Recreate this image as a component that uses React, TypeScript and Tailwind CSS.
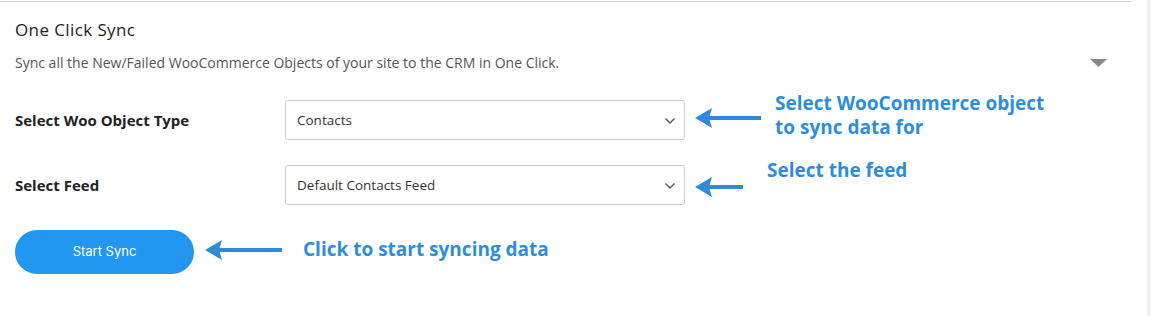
import React from "react";

function Arrow({ width }: { width: number }) {
  return (
    <svg width={width} height={20} viewBox={`0 0 ${width} 20`} className="shrink-0">
      <polygon points="0,10 17,0 14,10 17,20" fill="#2f8bd9" />
      <rect x={12} y={8} width={width - 12} height={4} fill="#2f8bd9" />
    </svg>
  );
}

function Select({ value }: { value: string }) {
  return (
    <div className="w-[400px] h-[40px] shrink-0 border border-[#cfcfcf] rounded-[3px] bg-white flex items-center justify-between pl-[11px] pr-[8px] text-[13.5px] text-[#333]">
      <span>{value}</span>
      <svg width="12" height="8" viewBox="0 0 12 8" className="mt-[1px]">
        <path d="M1.5 1.5 L6 6 L10.5 1.5" fill="none" stroke="#555" strokeWidth="1.4" />
      </svg>
    </div>
  );
}

const note = "font-['Open_Sans',sans-serif] font-bold text-[19px] leading-[24px] text-[#2e8ddb] whitespace-nowrap";

export default function App() {
  return (
    <div className="w-[1151px] h-[316px] bg-white flex font-['Open_Sans',sans-serif]">
      <div className="w-[1147px] pt-px">
        <div className="w-[1131px] border-t border-[#cccccc]" />
        <div className="w-[1131px] px-[15px]">
          <h2 className="mt-[16px] text-[17px] leading-[24px] tracking-[0.4px] font-medium text-[#222]">One Click Sync</h2>
          <div className="mt-[11px] flex items-center justify-between pr-[9px]">
            <p className="text-[14px] leading-[20px] text-[#555]">
              Sync all the New/Failed WooCommerce Objects of your site to the CRM in One Click.
            </p>
            <svg width="17" height="9" viewBox="0 0 17 9">
              <polygon points="0,0 17,0 8.5,8" fill="#8a8a8a" />
            </svg>
          </div>

          <div className="mt-[27px] h-[40px] flex items-center">
            <label className="w-[270px] shrink-0 text-[15px] font-bold text-[#222]">Select Woo Object Type</label>
            <Select value="Contacts" />
            <div className="ml-[10px] mb-[4px]">
              <Arrow width={66} />
            </div>
            <div className={`ml-[14px] self-start -mt-[9px] ${note}`}>
              Select WooCommerce object
              <br />
              to sync data for
            </div>
          </div>

          <div className="mt-[25px] h-[40px] flex items-center">
            <label className="w-[270px] shrink-0 text-[15px] font-bold text-[#222]">Select Feed</label>
            <Select value="Default Contacts Feed" />
            <div className="ml-[10px] mt-[3px]">
              <Arrow width={48} />
            </div>
            <div className={`ml-[24px] self-start -mt-[7px] ${note}`}>Select the feed</div>
          </div>

          <div className="mt-[25px] h-[44px] flex items-center">
            <button className="w-[179px] h-[44px] rounded-full bg-[#2397f0] text-white text-[13px] font-['Inter',sans-serif]">
              Start Sync
            </button>
            <div className="ml-[11px] mb-[4px]">
              <Arrow width={77} />
            </div>
            <div className={`ml-[21px] mb-[6px] ${note}`}>Click to start syncing data</div>
          </div>
        </div>
      </div>
      <div className="w-[4px] bg-[#f1f1f1]" />
    </div>
  );
}
